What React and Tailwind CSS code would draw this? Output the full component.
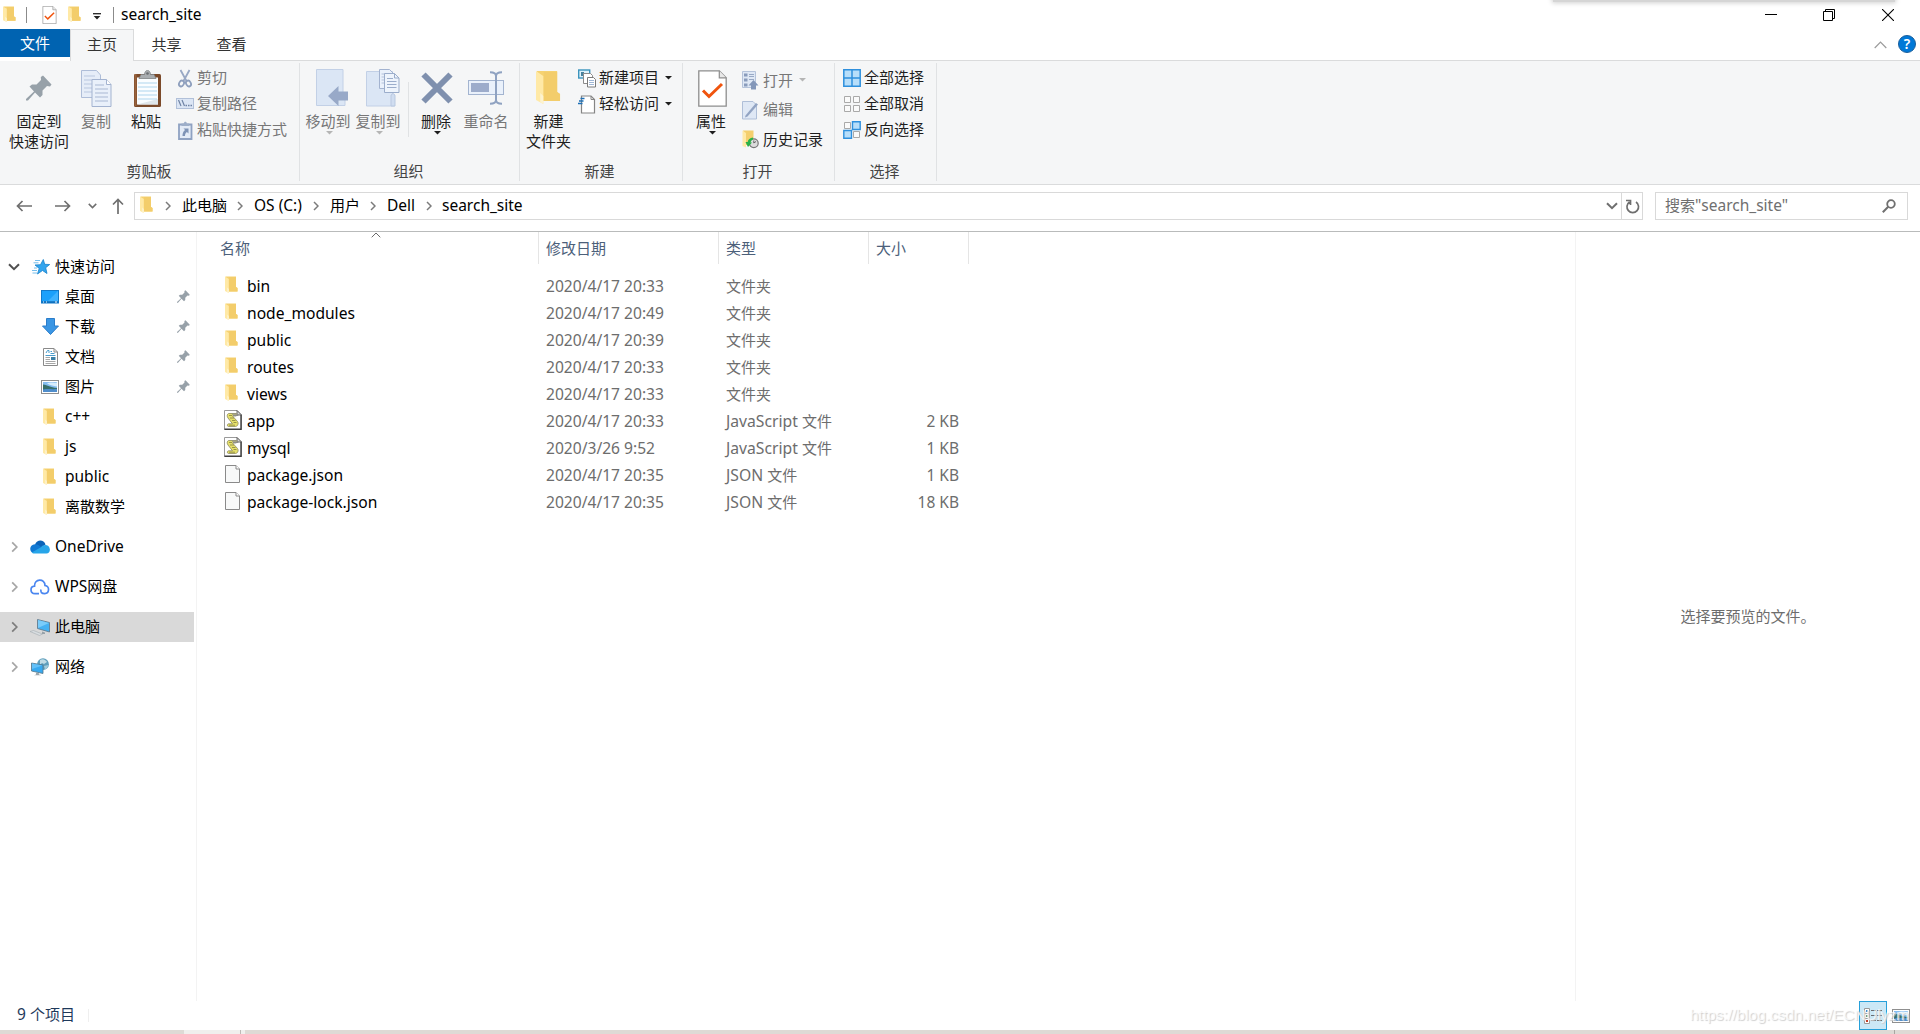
const quickAccess = [
  { name: "桌面", icon: "desktop", pinned: true },
  { name: "下载", icon: "download", pinned: true },
  { name: "文档", icon: "document", pinned: true },
  { name: "图片", icon: "picture", pinned: true },
  { name: "c++", icon: "folder", latin: true },
  { name: "js", icon: "folder", latin: true },
  { name: "public", icon: "folder", latin: true },
  { name: "离散数学", icon: "folder" },
];

const files = [
  { name: "bin", date: "2020/4/17 20:33", lang: "", type: "文件夹", size: "", icon: "folder" },
  { name: "node_modules", date: "2020/4/17 20:49", lang: "", type: "文件夹", size: "", icon: "folder" },
  { name: "public", date: "2020/4/17 20:39", lang: "", type: "文件夹", size: "", icon: "folder" },
  { name: "routes", date: "2020/4/17 20:33", lang: "", type: "文件夹", size: "", icon: "folder" },
  { name: "views", date: "2020/4/17 20:33", lang: "", type: "文件夹", size: "", icon: "folder" },
  { name: "app", date: "2020/4/17 20:33", lang: "JavaScript", type: "文件", size: "2 KB", icon: "script" },
  { name: "mysql", date: "2020/3/26 9:52", lang: "JavaScript", type: "文件", size: "1 KB", icon: "script" },
  { name: "package.json", date: "2020/4/17 20:35", lang: "JSON", type: "文件", size: "1 KB", icon: "file" },
  { name: "package-lock.json", date: "2020/4/17 20:35", lang: "JSON", type: "文件", size: "18 KB", icon: "file" },
];

/* ---------- Icons ---------- */

const FolderIcon = ({ className = "w-[13px] h-[18px]" }) => (
  <svg viewBox="0 0 13 18" className={className} preserveAspectRatio="none">
    <path d="M0.5 0.5h10.5v10.5l1.5 1v3.5h-9z" fill="#f6d271" />
    <path d="M4 1h7v10l1.5 1v3.5H4z" fill="#f3cd6b" />
    <path d="M0 0.5l3.8 2.5v14L0 15z" fill="#ffe9a6" />
    <path d="M2.2 11.5l1.6 1.5v4l-1.6-1z" fill="#fdf3cf" />
  </svg>
);

const PinIcon = ({ className = "w-[12px] h-[12px]" }) => (
  <svg viewBox="0 0 26 26" className={className}>
    <path
      d="M17 0.5L25.5 9.5 24 11.5 21 11 16.5 15.5 16.5 20 14 22.5 9 17.5 2 25.5 0 25.5 0 24 8 16.5 3.5 11.5 6 9.5 10.5 9.5 15 5 14.8 2z"
      fill="#97a1a9"
    />
  </svg>
);

const CheckPageIcon = ({ className }) => (
  <svg viewBox="0 0 29 37" className={className}>
    <path d="M0.8 0.8h20.5l6.9 7v28.4H0.8z" fill="#fff" stroke="#8d8d8d" strokeWidth="1.3" />
    <path d="M21.3 0.8v7h6.9" fill="#e8e8e8" stroke="#8d8d8d" strokeWidth="1.2" />
    <path d="M5 20.5l6 6L24 14" fill="none" stroke="#f0540e" strokeWidth="3" />
  </svg>
);

const CopyIcon = () => (
  <svg viewBox="0 0 31 37" className="w-[31px] h-[37px]">
    <path d="M.5.5h15l4 4.5v22.500H.5z" fill="#e6edf8" stroke="#aebdd8" />
    <path d="M3 6h11M3 10h14M3 14h14M3 18h14M3 22h14" stroke="#b9c7df" />
    <path d="M11 9.500h14.500l4.500 5v22H11z" fill="#e9f0fa" stroke="#a3b3d0" />
    <path d="M25.500 9.500v5H30" fill="#fff" stroke="#a3b3d0" />
    <path d="M14 15h9M14 19h13M14 23h13M14 27h13M14 31h13" stroke="#a9b8d3" />
  </svg>
);

const PasteIcon = () => (
  <svg viewBox="0 0 27 37" className="w-[27px] h-[37px]">
    <rect x="0" y="4" width="27" height="33" rx="1.500" fill="#7b4a2a" />
    <rect x="0.500" y="4" width="2" height="32" fill="#99633d" />
    <path d="M3 7.500h21v27H3z" fill="#fafdff" />
    <path d="M3 34.500L24 29v5.500z" fill="#dfe6ea" />
    <path d="M4 13h19M4 17h19M4 21h19M4 25h19M4 29h19" stroke="#add6ee" strokeWidth="1.200" />
    <path d="M5 8.500l2-4h3.500c.4-5.500 5.600-5.500 6 0H20l2 4z" fill="#a9adb0" stroke="#7d8184" strokeWidth=".8" />
    <circle cx="13.500" cy="3.500" r="1.300" fill="#696d70" />
  </svg>
);

const ScissorsIcon = () => (
  <svg viewBox="0 0 18 19" className="w-[18px] h-[19px]">
    <path d="M4.500 1l6 11M13.500 1l-6 11" stroke="#98a8c4" strokeWidth="1.800" fill="none" />
    <ellipse cx="5.500" cy="14.500" rx="2.300" ry="3" transform="rotate(30 5.500 14.500)" fill="none" stroke="#8e9fbd" strokeWidth="1.800" />
    <ellipse cx="12.500" cy="14.500" rx="2.300" ry="3" transform="rotate(-30 12.500 14.500)" fill="none" stroke="#8e9fbd" strokeWidth="1.800" />
  </svg>
);

const PathIcon = () => (
  <svg viewBox="0 0 18 18" className="w-[18px] h-[18px]">
    <rect x=".5" y="3.500" width="17" height="10" fill="#dce6f5" stroke="#b1c0d9" />
    <path d="M2.500 5l2.500 6M6 5l2.500 6" stroke="#6f83a5" strokeWidth="1.200" />
    <path d="M9.500 10.500h1.500M12 10.500h1.500M14.500 10.500H16" stroke="#6f83a5" strokeWidth="1.300" />
  </svg>
);

const ShortcutIcon = () => (
  <svg viewBox="0 0 18 19" className="w-[18px] h-[19px]">
    <path d="M3 3.500h12.500v14.500H3z" fill="#e3ebf7" stroke="#8fa2c2" strokeWidth="1.800" />
    <path d="M5.500 5V2.500h2.300C8 0 10.700 0 10.900 2.500h2.300V5z" fill="#9daec9" />
    <path d="M7.500 7.500h5v5l-1.600-1.600c-1.400 1-1.900 2.300-1.900 4.100H6.500c0-2.500.8-4.600 2.600-5.900z" fill="#7e93b6" />
  </svg>
);

const MoveToIcon = () => (
  <svg viewBox="0 0 33 38" className="w-[33px] h-[38px]">
    <path d="M.5.500h26.500v23l2 2v11H.5z" fill="#dbe6f5" stroke="#c2d0e6" />
    <path d="M12 27l10.500-10v5.500H32v9H22.500V37z" fill="#98a9c8" />
  </svg>
);

const CopyToIcon = () => (
  <svg viewBox="0 0 34 38" className="w-[34px] h-[38px]">
    <path d="M.5 2.500h26v22l2 1.500v11H.5z" fill="#dbe6f5" stroke="#c2d0e6" />
    <path d="M25 37V27c0-3 4-3 4 0v10z" fill="#d0ddf0" stroke="#b9c8e0" />
    <path d="M13.500.500h10l4 4v15h-14z" fill="#eaf1fb" stroke="#a3b3d0" />
    <path d="M15.500 5h7M15.500 8h9M15.500 11h9M15.500 14h9" stroke="#b3c1da" />
    <path d="M18.500 4.500h10l4.500 4.500v14.500H18.500z" fill="#eef4fc" stroke="#9badcb" />
    <path d="M28.500 4.500v4.500H33" fill="none" stroke="#9badcb" />
    <path d="M21 9.500h6M21 12.500h9.500M21 15.500h9.500M21 18.500h9.500" stroke="#9badcb" />
  </svg>
);

const DeleteIcon = () => (
  <svg viewBox="0 0 32 32" className="w-[32px] h-[32px]">
    <path d="M2.500 2.500l27 27M29.500 2.500l-27 27" stroke="#7f90ae" strokeWidth="6" />
  </svg>
);

const RenameIcon = () => (
  <svg viewBox="0 0 36 34" className="w-[36px] h-[34px]">
    <rect x=".5" y="9.500" width="35" height="14" fill="#eaf1fb" stroke="#a3b4d0" />
    <rect x="3" y="12" width="18" height="9" fill="#9daccb" />
    <path d="M22 1.200c4 0 6 1 6 3.800v24c0 2.800-2 3.800-6 3.800M34 1.200c-4 0-6 1-6 3.800v24c0 2.800 2 3.800 6 3.800" fill="none" stroke="#8fa2c1" strokeWidth="2" />
  </svg>
);

const NewItemIcon = () => (
  <svg viewBox="0 0 18 19" className="w-[18px] h-[19px]">
    <rect x=".7" y="1" width="11" height="8" fill="#dff2fb" stroke="#3b94bd" strokeWidth="1.400" />
    <path d="M3 3h3v4H3z" fill="#48829d" />
    <path d="M5.500 4.500h7l2 2v8h-9z" fill="#fff" stroke="#8b8b8b" />
    <path d="M9.500 8.500h6l2 2V18h-8z" fill="#fff" stroke="#7b7b7b" />
    <path d="M11 11.500h5M11 13.500h5M11 15.500h5" stroke="#9fb7d6" />
  </svg>
);

const EasyAccessIcon = () => (
  <svg viewBox="0 0 18 19" className="w-[18px] h-[19px]">
    <path d="M3.500 1H13l3.500 3.500V18h-13z" fill="#fff" stroke="#858585" strokeWidth="1.200" />
    <path d="M13 1v3.500h3.500" fill="none" stroke="#858585" />
    <path d="M2.500 3.500H6.500M1 6h4.500M0 8.500h4.500" stroke="#1d70b7" strokeWidth="1.300" />
  </svg>
);

const OpenIcon = () => (
  <svg viewBox="0 0 17 19" className="w-[17px] h-[19px]">
    <path d="M.5.500h13v16H.5z" fill="#dfe8f5" stroke="#b5c3da" />
    <path d="M2 2.500h3.500v3H2zM2 7.500h3.500v3H2zM2 12.500h3.500v3H2z" fill="#8a9cbc" />
    <path d="M7 3.500h5M7 5.500h5M7 8.500h5" stroke="#98a9c5" />
    <path d="M11.500 9l5 5.500h-2.500V18.500H9V14.500H6.500z" fill="#8397b9" />
  </svg>
);

const EditIcon = () => (
  <svg viewBox="0 0 17 19" className="w-[17px] h-[19px]">
    <path d="M.5.500h10.500l3.500 3.500v14H.5z" fill="#dfe8f5" stroke="#afbfd8" />
    <path d="M3.500 14.500L14 2l2 1.500L5.500 15.500l-2.500 1z" fill="#92a4c3" />
  </svg>
);

const HistoryIcon = () => (
  <svg viewBox="0 0 17 19" className="w-[17px] h-[19px]">
    <path d="M1 .5h10.500V15H4z" fill="#f4cf6d" />
    <path d="M.5.500L4 3v14.500L.5 16z" fill="#ffe9a6" />
    <circle cx="11.800" cy="13.200" r="4.400" fill="#dcdcdc" stroke="#777" strokeWidth="1.200" />
    <path d="M11.800 10.500V13l2.200-1.500" fill="none" stroke="#666" />
    <path d="M11 7.500c-3 .3-5 2-5.300 4.500H3.500L6 17l4-4.500H8.500c.2-1.500 1-2.500 2.500-3z" fill="#29b148" />
  </svg>
);

const SelectAllIcon = () => (
  <svg viewBox="0 0 18 18" className="w-[18px] h-[18px]">
    <path d="M.8.800h16.400v16.400H.8zM9 .8v16.400M.8 9h16.400" fill="#b7defa" stroke="#2f90dd" strokeWidth="1.500" />
  </svg>
);

const SelectNoneIcon = () => (
  <svg viewBox="0 0 18 18" className="w-[18px] h-[18px]">
    <path d="M1.500 1.500h6v6h-6zM10.500 1.500h6v6h-6zM1.500 10.500h6v6h-6zM10.500 10.500h6v6h-6z" fill="#fafafa" stroke="#a9a9a9" />
  </svg>
);

const InvertIcon = () => (
  <svg viewBox="0 0 18 18" className="w-[18px] h-[18px]">
    <path d="M1.500 1.500h6v6h-6zM10.500 10.500h6v6h-6z" fill="#fafafa" stroke="#a9a9a9" />
    <path d="M9.500.800h7.700v7.700H9.500zM.8 9.500h7.700v7.700H.8z" fill="#b7defa" stroke="#2f90dd" strokeWidth="1.400" />
  </svg>
);

const Caret = ({ className = "text-[#1e1e1e]" }) => (
  <svg viewBox="0 0 7 4" className={`w-[7px] h-[4px] shrink-0 ${className}`}>
    <path d="M0 0h7L3.500 3.500z" fill="currentColor" />
  </svg>
);

const ChevronRight = ({ className = "w-[6px] h-[10px] text-[#7b7b7b]" }) => (
  <svg viewBox="0 0 6 10" className={className}>
    <path d="M1 1l4 4-4 4" fill="none" stroke="currentColor" strokeWidth="1.500" />
  </svg>
);

const ChevronDown = ({ className }) => (
  <svg viewBox="0 0 12 8" className={className}>
    <path d="M1 1.200l5 5 5-5" fill="none" stroke="currentColor" strokeWidth="2" />
  </svg>
);

const PictureIcon = () => (
  <svg viewBox="0 0 18 14" className="w-[18px] h-[14px]">
    <rect x=".5" y=".5" width="17" height="13" fill="#fff" stroke="#8f8f8f" />
    <rect x="2" y="2" width="14" height="10" fill="#86bdf0" />
    <path d="M2 4.500c5 .5 7 3 14 3.500v2H2z" fill="#386f6a" />
    <path d="M2 9.500c5-1 8 0 14-.5v3H2z" fill="#4f8dcb" />
    <path d="M6 3.500c4-2 6 0 10-1v4c-4-.5-6-1-10-3z" fill="#d8edfb" />
  </svg>
);

const DocumentIcon = () => (
  <svg viewBox="0 0 15 18" className="w-[15px] h-[18px]">
    <path d="M.5.500h10.500l3.500 3.500v13.500H.5z" fill="#fff" stroke="#8a8a8a" />
    <path d="M11 .5V4h3.500" fill="none" stroke="#8a8a8a" />
    <path d="M3 5l1.500-2.500H6V5M2.500 7.500h10" fill="none" stroke="#4a9ccc" />
    <path d="M7.500 3.500H9M7.500 5.500h4" stroke="#4a9ccc" />
    <path d="M2.500 9.500H7M2.500 11.500H7M2.500 13.500h10M2.500 15.500h10" stroke="#a6a6a6" />
    <path d="M8 9h4.500v3H8z" fill="#3a7fa6" />
  </svg>
);

const ScriptIcon = () => (
  <svg viewBox="0 0 18 20" className="w-[18px] h-[20px]">
    <path d="M.5.500H13l4.500 4.500v14.500H.5z" fill="#fff" stroke="#9a9a9a" />
    <path d="M17 5v14.300H.5" fill="none" stroke="#3e3e3e" strokeWidth="1.400" />
    <path d="M13 .5V5h4.500z" fill="#d9d9d9" stroke="#4b4b4b" strokeWidth=".8" />
    <path d="M4.500 3.500h8c1 1 .8 2-.5 2.500H8.500l5 5.500c1.500 2 0 5-2 5H4.500c-1.500 0-1.500-2.500 0-2.700h4L4 8C2.800 6.500 3 4 4.500 3.500z" fill="#e6e06a" stroke="#8b8960" strokeWidth=".8" />
    <path d="M5 5.500h3M6 8h4M8 10.500h3.500M9.500 12.500h3M5 15.200h6" stroke="#85823f" strokeWidth=".8" />
    <path d="M8 4.200h6v1.300H9" fill="none" stroke="#8d8d8d" />
  </svg>
);

const FileIcon = () => (
  <svg viewBox="0 0 15 18" className="w-[15px] h-[18px]">
    <path d="M.5.500H11l3.500 3.500v13.500H.5z" fill="#f8f9f9" stroke="#8a8a8a" />
    <path d="M11 .5V4h3.500" fill="#fff" stroke="#8a8a8a" />
  </svg>
);

const StarIcon = () => (
  <svg viewBox="0 0 18 16" className="w-[18px] h-[16px]">
    <path d="M3 1.500h5M1.500 3.800h5M0 11.500h5M.5 14h4.500M2 9h3" stroke="#67b7ea" strokeWidth=".9" />
    <path d="M11.300.500l1.400 4.800 5 .2-4 3.200 1.300 5.800-4.500-3-5 3.500 1.700-5.600L3 6l5.500-.3z" fill="#33a5ee" stroke="#1681cc" strokeWidth=".8" />
  </svg>
);

const DesktopIcon = () => (
  <svg viewBox="0 0 18 14" className="w-[18px] h-[14px]">
    <rect x=".5" y=".5" width="17" height="12.500" fill="#1ba0fb" stroke="#1379c9" />
    <path d="M6 12L17 1v11z" fill="#3fb2ff" />
    <path d="M1 12h16" stroke="#0a63ad" strokeWidth="1.300" />
    <path d="M2 12h1M5 12h1M14 12h2" stroke="#fff" />
  </svg>
);

const DownloadIcon = () => (
  <svg viewBox="0 0 17 17" className="w-[17px] h-[17px]">
    <path d="M4.500.500h8v7.500h4l-8 8.500-8-8.500h4z" fill="#3a96e4" stroke="#2b7dca" />
  </svg>
);

const OneDriveIcon = () => (
  <svg viewBox="0 0 20 14" className="w-[20px] h-[14px]">
    <path d="M5 4.500C7-1 14-.7 15.500 4.500L10 9z" fill="#0a62b8" />
    <path d="M3.500 13C-1.500 12 -.5 4.500 5 4.300c3-.1 4.500 1.700 6.500 3L5 13z" fill="#1179d3" />
    <path d="M11 7.300C13 4 19.500 4 19.900 9.500c0 2.500-1.500 4-3.500 4H4c-1 0-1.800-.5-2.300-1z" fill="#27a5e9" />
  </svg>
);

const WpsIcon = () => (
  <svg viewBox="0 0 20 16" className="w-[20px] h-[16px]">
    <path
      d="M9 14.700H5C-.3 14.700-.2 7.500 4.500 7.200 4 -.5 15-1 15 6.500c5 .8 4.500 8-.3 8.200-3 0-4.500-1.500-3.700-4.200"
      fill="none"
      stroke="#4a86f0"
      strokeWidth="1.700"
    />
  </svg>
);

const ThisPcIcon = () => (
  <svg viewBox="0 0 20 17" className="w-[20px] h-[17px]">
    <path d="M7.500.500l12 3v9.500l-12-3.500z" fill="#45b1f2" stroke="#5f7585" strokeWidth=".8" />
    <path d="M8 1l11 3-11 5z" fill="#7accfa" />
    <path d="M0 12.500l3.500-1 9 3.500-3 1.500z" fill="#d8dde0" stroke="#a4acb1" strokeWidth=".6" />
    <path d="M12 12.500l3 1v1.500h-3z" fill="#98a2a9" />
  </svg>
);

const NetworkIcon = () => (
  <svg viewBox="0 0 18 18" className="w-[18px] h-[18px]">
    <circle cx="12" cy="6.200" r="5.900" fill="#5f9fbd" />
    <path d="M9 2c3-2 6 0 7 2l-3 2-2-1-2 2z" fill="#c0dbe5" />
    <path d="M13 8l4-1c0 2-1 3.500-3 4.500z" fill="#a3cad9" />
    <path d="M.5 5l11.500 2v8.500L.5 13z" fill="#37a9f0" stroke="#567386" strokeWidth=".8" />
    <path d="M1 5.500l10.500 2L1 11z" fill="#62c0f8" />
    <path d="M5 14.500l3 .7v1.300l2.500.8H3l2-.8z" fill="#9aa5ac" />
  </svg>
);

const icons = {
  desktop: DesktopIcon,
  download: DownloadIcon,
  document: DocumentIcon,
  picture: PictureIcon,
  folder: FolderIcon,
  script: ScriptIcon,
  file: FileIcon,
};

/* ---------- Ribbon pieces ---------- */

const Group = ({ label, className, children }) => (
  <div className={`flex flex-col relative h-[123px] shrink-0 ${className}`}>
    <div className="flex h-[98px] pt-[3px]">{children}</div>
    <div className="text-center leading-6 text-[#444] pr-[3px]">{label}</div>
    <div className="absolute right-0 top-[2px] w-px h-[118px] bg-[#e0e2e4]" />
  </div>
);

const BigButton = ({ icon, lines, className, muted, caret, shift = "" }) => (
  <div className={`flex flex-col items-center shrink-0 whitespace-nowrap ${muted ? "text-[#777]" : "text-[#1e1e1e]"} ${className}`}>
    <div className={`flex items-center justify-center h-[48px] -mb-px shrink-0 ${shift}`}>{icon}</div>
    {lines.map((line) => (
      <div key={line} className="leading-5 h-5">{line}</div>
    ))}
    {caret && <Caret className={muted ? "text-[#b5b5b5] ml-[3px]" : "text-[#1e1e1e] ml-[3px]"} />}
  </div>
);

const SmallButton = ({ icon, label, muted, caret, className = "h-[26px]" }) => (
  <div className={`flex items-center whitespace-nowrap ${muted ? "text-[#777]" : "text-[#1e1e1e]"} ${className}`}>
    <div className="w-[18px] mr-[3px] flex shrink-0">{icon}</div>
    <span className="-mt-px">{label}</span>
    {caret && <Caret className={muted ? "text-[#b5b5b5] ml-[6px] -mt-px" : "text-[#1e1e1e] ml-[6px] -mt-px"} />}
  </div>
);

const TitleBar = () => (
  <div className="flex items-center h-[29px] shrink-0 relative">
    <FolderIcon className="w-[13px] h-[17px] ml-[3px]" />
    <div className="w-px h-[16px] bg-[#8b8b8b] ml-[10px]" />
    <CheckPageIcon className="w-[15px] h-[18px] ml-[15px]" />
    <FolderIcon className="w-[13px] h-[17px] ml-[11px]" />
    <svg viewBox="0 0 8 7" className="w-[8px] h-[7px] ml-[12px] mt-[3px]">
      <path d="M0 .7h8" stroke="#222" strokeWidth="1.300" />
      <path d="M.7 3h6.600L4 6.500z" fill="#222" />
    </svg>
    <div className="w-px h-[16px] bg-[#8b8b8b] ml-[12px]" />
    <span className="ml-[7px] text-[15.5px] text-black">search_site</span>

    <div className="flex items-center ml-auto mr-[26px]">
      <svg viewBox="0 0 12 12" className="w-[12px] h-[12px] mr-[46px]">
        <path d="M0 5.500h12" stroke="#000" />
      </svg>
      <svg viewBox="0 0 12 12" className="w-[12px] h-[12px] mr-[47px]">
        <path d="M.5 2.500h9v9h-9zM2.500 2.500v-2h9v9h-2" fill="none" stroke="#000" />
      </svg>
      <svg viewBox="0 0 12 12" className="w-[12px] h-[12px]">
        <path d="M0 0l12 12M12 0L0 12" stroke="#000" strokeWidth="1.100" />
      </svg>
    </div>
    {/* Shadow cast by the window above */}
    <div className="absolute -top-[6px] left-[1553px] w-[342px] h-[8px] bg-[#d5d5d5] shadow-[0_0_5px_1px_#d0d0d0]" />
  </div>
);

const Tabs = () => (
  <div className="flex h-[32px] shrink-0 text-[#333] leading-[30px] text-center">
    <div className="w-[70px] h-[28px] bg-[#0063b1] text-white leading-[29px]">文件</div>
    <div className="w-[64px] h-[32px] border border-b-0 border-[#dadbdc] bg-[#f5f6f7] leading-[29px]">主页</div>
    <div className="flex flex-1 border-b border-[#dadbdc]">
      <div className="w-[65px]">共享</div>
      <div className="w-[65px]">查看</div>
      <div className="flex items-center ml-auto mr-1">
        <svg viewBox="0 0 13 8" className="w-[13px] h-[8px] mr-[11px]">
          <path d="M.7 7l5.800-5.800L12.300 7" fill="none" stroke="#9b9b9b" strokeWidth="1.200" />
        </svg>
        <div className="w-[18px] h-[18px] -mt-px rounded-full bg-[#0078d7] border border-[#1b5f9c] text-white text-sm font-semibold leading-4">?</div>
      </div>
    </div>
  </div>
);

const Ribbon = () => (
  <div className="flex h-[124px] shrink-0 bg-[#f5f6f7] border-b border-[#dadbdc]">
    <Group label="剪贴板" className="w-[300px] pl-px">
      <BigButton className="w-[76px]" icon={<PinIcon className="w-[26px] h-[26px]" />} lines={["固定到", "快速访问"]} />
      <BigButton className="w-[38px]" muted icon={<CopyIcon />} lines={["复制"]} shift="ml-[1px]" />
      <BigButton className="w-[52px] ml-[5px]" icon={<PasteIcon />} lines={["粘贴"]} shift="ml-[2px]" />
      <div className="ml-[4px] pt-[1px]">
        <SmallButton muted icon={<ScissorsIcon />} label="剪切" />
        <SmallButton muted icon={<PathIcon />} label="复制路径" />
        <SmallButton muted icon={<ShortcutIcon />} label="粘贴快捷方式" />
      </div>
    </Group>

    <Group label="组织" className="w-[220px]">
      <BigButton className="w-[50px] ml-[3px]" muted caret icon={<MoveToIcon />} lines={["移动到"]} shift="ml-[8px]" />
      <BigButton className="w-[50px]" muted caret icon={<CopyToIcon />} lines={["复制到"]} shift="ml-[9px]" />
      <div className="w-px h-[55px] mt-[18px] ml-[5px] bg-[#e0e2e4]" />
      <BigButton className="w-[50px] ml-[2px]" caret icon={<DeleteIcon />} lines={["删除"]} shift="ml-[2px]" />
      <BigButton className="w-[50px]" muted icon={<RenameIcon />} lines={["重命名"]} />
    </Group>

    <Group label="新建" className="w-[163px] pr-px">
      <BigButton className="w-[57px]" icon={<FolderIcon className="w-[25px] h-[36px]" />} lines={["新建", "文件夹"]} />
      <div className="ml-px pt-[1px]">
        <SmallButton caret icon={<NewItemIcon />} label="新建项目" />
        <SmallButton caret icon={<EasyAccessIcon />} label="轻松访问" />
      </div>
    </Group>

    <Group label="打开" className="w-[152px]">
      <BigButton className="w-[56px]" caret icon={<CheckPageIcon className="w-[29px] h-[37px]" />} lines={["属性"]} shift="ml-[2px]" />
      <div className="ml-[3px] pt-[2px]">
        <SmallButton muted caret icon={<OpenIcon />} label="打开" className="h-[29px]" />
        <SmallButton muted icon={<EditIcon />} label="编辑" className="h-[30px]" />
        <SmallButton icon={<HistoryIcon />} label="历史记录" className="h-[29px]" />
      </div>
    </Group>

    <Group label="选择" className="w-[102px]">
      <div className="ml-[8px] pt-[1px]">
        <SmallButton icon={<SelectAllIcon />} label="全部选择" />
        <SmallButton icon={<SelectNoneIcon />} label="全部取消" />
        <SmallButton icon={<InvertIcon />} label="反向选择" />
      </div>
    </Group>
  </div>
);

const AddressBar = () => (
  <div className="flex h-[47px] pt-[7px] shrink-0 border-b border-[#b9bbbb]">
    <div className="flex items-center w-[134px] h-[28px] text-[#6f6f6f]">
      <svg viewBox="0 0 16 12" className="w-[16px] h-[12px] ml-[16px]">
        <path d="M6.500 1L1.500 6l5 5M1.500 6H16" fill="none" stroke="currentColor" strokeWidth="1.700" />
      </svg>
      <svg viewBox="0 0 16 12" className="w-[16px] h-[12px] ml-[23px]">
        <path d="M9.500 1l5 5-5 5M14.500 6H0" fill="none" stroke="currentColor" strokeWidth="1.700" />
      </svg>
      <ChevronDown className="w-[9px] h-[6px] ml-[17px]" />
      <svg viewBox="0 0 12 16" className="w-[12px] h-[16px] ml-[15px]">
        <path d="M1 6.500l5-5 5 5M6 1.500V16" fill="none" stroke="currentColor" strokeWidth="1.700" />
      </svg>
    </div>

    <div className="flex items-center w-[1509px] h-[28px] border border-[#d9d9d9] text-black">
      <FolderIcon className="w-[13px] h-[18px] ml-[5px] -mt-[3px]" />
      <ChevronRight className="w-[6px] h-[10px] ml-[12px] text-[#7b7b7b]" />
      <span className="ml-[11px] w-[45px] -mt-px">此电脑</span>
      <ChevronRight className="w-[6px] h-[10px] ml-[10px] text-[#7b7b7b]" />
      <span className="ml-[11px] w-[49px] text-[15.5px] whitespace-nowrap">OS (C:)</span>
      <ChevronRight className="w-[6px] h-[10px] ml-[10px] text-[#7b7b7b]" />
      <span className="ml-[11px] w-[30px] -mt-px">用户</span>
      <ChevronRight className="w-[6px] h-[10px] ml-[10px] text-[#7b7b7b]" />
      <span className="ml-[11px] w-[28px] text-[15.5px]">Dell</span>
      <ChevronRight className="w-[6px] h-[10px] ml-[11px] text-[#7b7b7b]" />
      <span className="ml-[10px] text-[15.5px]">search_site</span>
      <ChevronDown className="w-[12px] h-[8px] ml-auto mr-[3px] text-[#6f6f6f]" />
      <div className="flex items-center justify-center w-[21px] h-[26px] border-l border-[#d9d9d9]">
        <svg viewBox="0 0 15 15" className="w-[15px] h-[15px]">
          <path d="M11 3a5.800 5.800 0 1 1-6.500 0M1 1.500h4.500V6" fill="none" stroke="#6f6f6f" strokeWidth="1.700" />
        </svg>
      </div>
    </div>

    <div className="flex items-center w-[253px] h-[28px] ml-[12px] border border-[#d9d9d9] text-[#6f6f6f]">
      <span className="ml-[9px]">搜索<span className="text-[15.5px]">"search_site"</span></span>
      <svg viewBox="0 0 14 14" className="w-[14px] h-[14px] ml-auto mr-[11px]">
        <circle cx="9" cy="5" r="3.800" fill="none" stroke="currentColor" strokeWidth="1.800" />
        <path d="M6.200 7.800L.8 13.200" stroke="currentColor" strokeWidth="2" />
      </svg>
    </div>
  </div>
);

const TreeItem = ({ icon, label, selected, latin, className = "" }) => (
  <div className={`flex items-center w-[194px] h-[30px] mt-[10px] ${selected ? "bg-[#d9d9d9]" : ""} ${className}`}>
    <ChevronRight className={selected ? "w-[7px] h-[12px] ml-[11px] text-[#7d7d7d]" : "w-[7px] h-[12px] ml-[11px] text-[#a6a6a6]"} />
    <div className="flex justify-center w-[20px] ml-[12px] mr-[5px]">{icon}</div>
    <span className={latin ? "text-[15.5px]" : "-mt-px"}>{label}</span>
  </div>
);

const Sidebar = () => (
  <div className="w-[197px] shrink-0 pt-[20px] border-r border-[#f3f3f3] text-black">
    <div className="flex items-center h-[30px]">
      <ChevronDown className="w-[12px] h-[8px] ml-[8px] text-[#505050]" />
      <div className="ml-[12px] mr-[5px]"><StarIcon /></div>
      <span className="-mt-px">快速访问</span>
    </div>
    {quickAccess.map((item) => {
      const Icon = icons[item.icon];
      return (
        <div key={item.name} className="flex items-center h-[30px]">
          <div className={`flex w-[18px] ml-[41px] mr-[6px] -mt-px ${item.icon === "folder" ? "pl-[2px]" : "justify-center"}`}>
            <Icon />
          </div>
          <span className={item.latin ? "text-[15.5px]" : "-mt-px"}>{item.name}</span>
          {item.pinned && <PinIcon className="w-[13px] h-[13px] ml-auto mr-[6px] -mt-px" />}
        </div>
      );
    })}
    <TreeItem icon={<OneDriveIcon />} label="OneDrive" latin />
    <TreeItem icon={<WpsIcon />} label={<><span className="text-[15.5px]">WPS</span>网盘</>} />
    <TreeItem icon={<ThisPcIcon />} label="此电脑" selected />
    <TreeItem icon={<NetworkIcon />} label="网络" />
  </div>
);

const FileList = () => (
  <div className="flex-1 pl-[15px] relative">
    <div className="flex h-[32px] leading-[32px] text-[#4c607a]">
      <div className="w-[327px] pl-[8px] border-r border-[#e5e5e5]">名称</div>
      <div className="w-[180px] pl-[7px] border-r border-[#e5e5e5]">修改日期</div>
      <div className="w-[150px] pl-[7px] border-r border-[#e5e5e5]">类型</div>
      <div className="w-[100px] pl-[7px] border-r border-[#e5e5e5]">大小</div>
    </div>
    {/* Sort indicator */}
    <svg viewBox="0 0 10 6" className="absolute left-[174px] top-0 w-[10px] h-[6px]">
      <path d="M.7 5.300L5 1l4.300 4.300" fill="none" stroke="#6a6a6a" />
    </svg>

    <div className="pt-[9px]">
      {files.map((file) => {
        const Icon = icons[file.icon];
        return (
          <div key={file.name} className="flex items-center h-[27px] text-[#6d6d6d]">
            <div className={`w-[20px] ml-[12px] mr-[3px] flex -mt-[3px] ${file.icon === "script" ? "" : "pl-[1px]"}`}>
              <Icon />
            </div>
            <div className="w-[299px] text-[15.6px] text-black">{file.name}</div>
            <div className="w-[180px] text-[15.6px]">{file.date}</div>
            <div className="w-[150px]">
              {file.lang && <span className="text-[15.7px]">{file.lang} </span>}
              {file.type}
            </div>
            <div className="w-[83px] text-right text-[15.5px]">{file.size}</div>
          </div>
        );
      })}
    </div>
  </div>
);

const StatusBar = () => (
  <div className="flex items-center h-[29px] shrink-0 relative">
    <span className="ml-[17px] -mt-px text-[#1e395b]">
      <span className="text-[15.5px]">9 </span>个项目
    </span>
    <div className="w-px h-[13px] ml-[13px] bg-[#efefef]" />
    <div className="flex items-center ml-auto mr-[10px]">
      <div className="flex items-center justify-center w-[28px] h-[29px] border border-[#26a0da] bg-[#cbe8f6]">
        <svg viewBox="0 0 18 16" className="w-[18px] h-[16px]">
          <path d="M.5.500h5v15h-5zM.5 5.500h5M.5 10.500h5" fill="#fff" stroke="#9a9a9a" />
          <path d="M2 2h2v2H2z" fill="#3e76b5" />
          <path d="M2 7h2v2H2z" fill="#6a8a3e" />
          <path d="M2 12h2v2H2z" fill="#c43c24" />
          <path d="M7 2.500h5M13 2.500h5M7 7.500h5M13 7.500h5M7 12.500h5M13 12.500h5" stroke="#6c6c6c" />
        </svg>
      </div>
      <div className="ml-[5px]"><PictureIcon /></div>
    </div>
    <span className="absolute left-[1690px] top-[2px] text-[15.5px] leading-6 whitespace-nowrap text-white/70 [text-shadow:1px_1px_1px_#cfcfcf] [font-family:'Liberation_Sans',Arial,sans-serif]">
      https://blog.csdn.net/ECNUlyzm
    </span>
  </div>
);

const App = () => {
  return (
    <div className="flex flex-col w-[1920px] h-[1034px] overflow-hidden bg-white text-[15px] [font-family:'Noto_Sans','Noto_Sans_CJK_SC',sans-serif]">
      <TitleBar />
      <Tabs />
      <Ribbon />
      <AddressBar />
      <div className="flex flex-1 min-h-0">
        <Sidebar />
        <FileList />
        {/* Preview pane */}
        <div className="flex items-center justify-center w-[345px] border-l border-[#f3f3f3] text-[#6d6d6d]">
          选择要预览的文件。
        </div>
      </div>
      <StatusBar />
      <div className="flex h-[4px] shrink-0 bg-[#dedad5]">
        <div className="w-[56px] ml-[184px] bg-[#f0efed]" />
        <div className="w-px bg-[#bdbab6]" />
        <div className="w-[4px] bg-[#f0efed]" />
        <div className="w-px ml-auto mr-[25px] bg-[#a9a6a2]" />
      </div>
    </div>
  );
};

export default App;
